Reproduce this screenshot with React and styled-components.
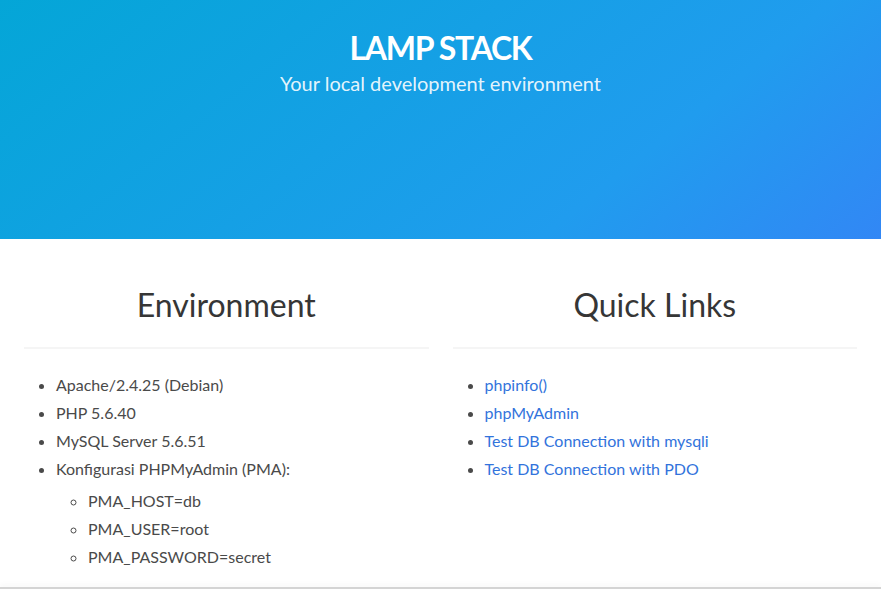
import React from 'react';
import styled, { createGlobalStyle } from 'styled-components';

const GlobalStyle = createGlobalStyle`
    html, body {
        margin: 0;
        padding: 0;
        background: #ffffff;
    }

    body {
        font-family: Lato, "Open Sans", sans-serif;
        font-size: 16px;
        line-height: 1.5;
        color: #4a4a4a;
    }

    * {
        box-sizing: border-box;
    }
`;

const Hero = styled.section`
    min-height: 239px;
    padding: 30px 24px;
    text-align: center;
    color: #ffffff;
    background-image: linear-gradient(141deg, #04a6d7 0%, #209cee 71%, #3287f5 100%);
`;

const HeroTitle = styled.h1`
    margin: 0;
    font-size: 32px;
    font-weight: 700;
    line-height: 1.125;
    letter-spacing: -1.3px;
    color: #ffffff;
`;

const HeroSubtitle = styled.h2`
    margin: 5px 0 0;
    font-size: 20px;
    font-weight: 400;
    line-height: 1.25;
    color: rgba(255, 255, 255, 0.9);
`;

const Section = styled.section`
    padding: 48px 24px;
`;

const Columns = styled.div`
    display: grid;
    grid-template-columns: 1fr 1fr;
    column-gap: 24px;
`;

const Column = styled.div`
    display: flex;
    flex-direction: column;
`;

const ColumnTitle = styled.h3`
    margin: 0;
    font-size: 32px;
    font-weight: 400;
    line-height: 1.125;
    text-align: center;
    color: #363636;
`;

const Divider = styled.hr`
    height: 2px;
    margin: 24px 0;
    border: none;
    background: #f5f5f5;
`;

const List = styled.ul`
    margin: ${(p) => (p.$nested ? '8px 0 0' : '0')};
    padding: 0 0 0 32px;
    list-style: ${(p) => (p.$nested ? 'circle' : 'disc')};
`;

const Item = styled.li`
    & + & {
        margin-top: 4px;
    }
`;

const Link = styled.a`
    color: #3273dc;
    text-decoration: none;
`;

/* shadow at the bottom edge of the window */
const BottomEdge = styled.div`
    position: fixed;
    left: 0;
    right: 0;
    bottom: 0;
    height: 2px;
    background: #d4d4d4;
    box-shadow: 0 -2px 5px rgba(0, 0, 0, 0.06);
`;

const environment = ['Apache/2.4.25 (Debian)', 'PHP 5.6.40', 'MySQL Server 5.6.51'];
const pmaConfig = ['PMA_HOST=db', 'PMA_USER=root', 'PMA_PASSWORD=secret'];
const links = [
  { label: 'phpinfo()', href: '#phpinfo' },
  { label: 'phpMyAdmin', href: '#phpmyadmin' },
  { label: 'Test DB Connection with mysqli', href: '#mysqli' },
  { label: 'Test DB Connection with PDO', href: '#pdo' },
];

function App() {
  return (
    <>
      <GlobalStyle />
      <Hero>
        <HeroTitle>LAMP STACK</HeroTitle>
        <HeroSubtitle>Your local development environment</HeroSubtitle>
      </Hero>

      <Section>
        <Columns>
          <Column>
            <ColumnTitle>Environment</ColumnTitle>
            <Divider />
            <List>
              {environment.map((e) => (
                <Item key={e}>{e}</Item>
              ))}
              <Item>
                Konfigurasi PHPMyAdmin (PMA):
                <List $nested>
                  {pmaConfig.map((c) => (
                    <Item key={c}>{c}</Item>
                  ))}
                </List>
              </Item>
            </List>
          </Column>

          <Column>
            <ColumnTitle>Quick Links</ColumnTitle>
            <Divider />
            <List>
              {links.map((l) => (
                <Item key={l.label}>
                  <Link href={l.href}>{l.label}</Link>
                </Item>
              ))}
            </List>
          </Column>
        </Columns>
      </Section>
      <BottomEdge />
    </>
  );
}

export default App;
